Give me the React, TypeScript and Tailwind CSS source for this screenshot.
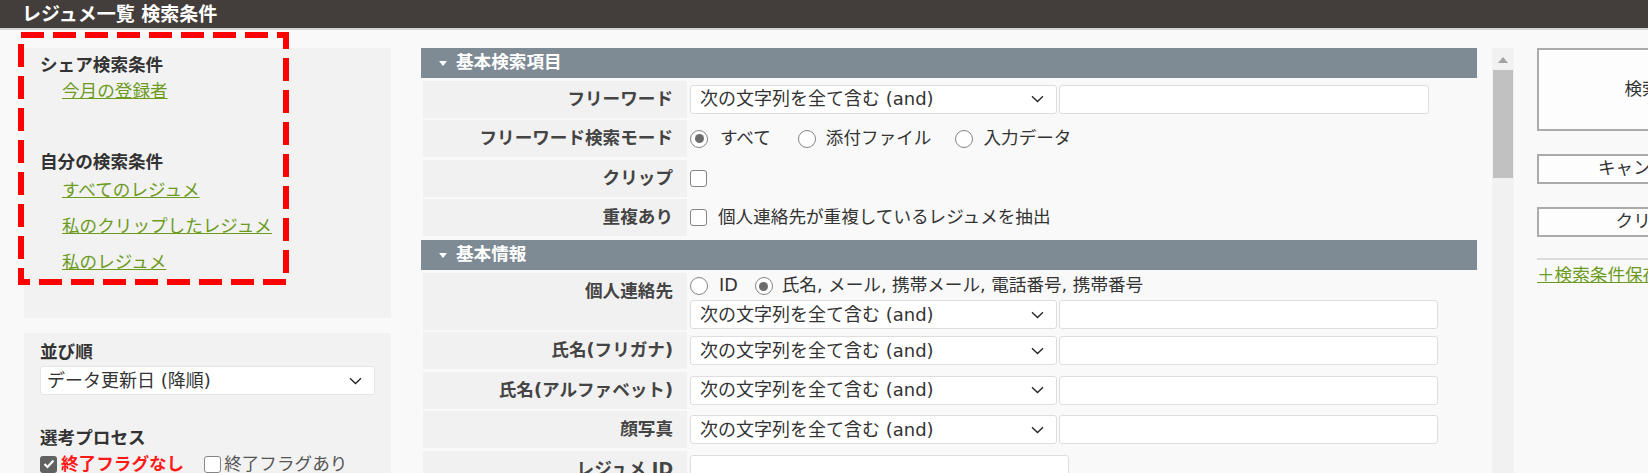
import React from 'react';

const FONT = "font-['DejaVu_Sans','Noto_Sans_CJK_JP',sans-serif]";

function Chevron() {
  return (
    <svg width="13" height="8" viewBox="0 0 13 8" className="shrink-0">
      <path d="M1 1.2 L6.5 6.5 L12 1.2" fill="none" stroke="#222" strokeWidth="1.3" />
    </svg>
  );
}

function Select({ text, w }: { text: string; w: string }) {
  return (
    <div className={`${w} h-[29px] bg-white border border-[#dedede] rounded-[3px] flex items-center justify-between pl-[9px] pr-[12px] text-[18px] leading-none text-[#333] shrink-0`}>
      <span className="whitespace-nowrap">{text}</span>
      <Chevron />
    </div>
  );
}

function Input({ w }: { w: string }) {
  return <div className={`${w} h-[29px] bg-white border border-[#dedede] rounded-[3px] shrink-0`} />;
}

function Radio({ checked }: { checked?: boolean }) {
  return (
    <span className="w-[18px] h-[18px] rounded-full border-[1.5px] border-[#858585] bg-white flex items-center justify-center shrink-0">
      {checked && <span className="w-[9px] h-[9px] rounded-full bg-[#6b6b6b]" />}
    </span>
  );
}

function Check() {
  return <span className="w-[17px] h-[17px] rounded-[3px] border-[1.5px] border-[#858585] bg-white shrink-0" />;
}

function SectionHeader({ title }: { title: string }) {
  return (
    <div className="h-[30px] bg-[#7e8b95] flex items-center pl-[18px] gap-[9px] text-white font-bold text-[17.6px] leading-none">
      <svg width="8" height="5" viewBox="0 0 8 5">
        <path d="M0 0 L8 0 L4 5 Z" fill="#fff" />
      </svg>
      <span>{title}</span>
    </div>
  );
}

function Row({ label, h = 'h-[37px]', children }: { label: string; h?: string; children: React.ReactNode }) {
  return (
    <div className={`flex gap-[3px] ${h}`}>
      <div className="w-[264px] ml-[2px] bg-[#f1f1f1] text-right pr-[14px] font-bold text-[17.6px] leading-[37px] text-[#444] shrink-0 whitespace-nowrap">
        {label}
      </div>
      <div className="flex-1 flex flex-col justify-center">{children}</div>
    </div>
  );
}

const AND = '次の文字列を全て含む (and)';

export default function App() {
  return (
    <div className={`w-[1648px] h-[473px] overflow-hidden bg-[#f9f9f9] relative ${FONT}`}>
      {/* Header */}
      <header className="h-[30px] bg-[#433e3b] border-b-2 border-[#d4d4d4] pl-[22px] flex items-center text-white font-bold text-[19px] leading-none">
        レジュメ一覧 検索条件
      </header>

      <div className="flex pt-[18px] pl-[24px]">
        {/* Left column */}
        <aside className="w-[367px] shrink-0 flex flex-col gap-[15px]">
          <div className="h-[270px] bg-[#f2f2f2] pl-[16px] pt-[4px] text-[17.6px]">
            <div className="font-bold text-[#333] leading-[26px]">シェア検索条件</div>
            <div className="pl-[22px] leading-[26px]">
              <a className="text-[#6c9b1e] underline">今月の登録者</a>
            </div>
            <div className="font-bold text-[#333] leading-[26px] mt-[45px]">自分の検索条件</div>
            <div className="pl-[22px] flex flex-col gap-[10px] mt-[2px] leading-[26px] items-start">
              <a className="text-[#6c9b1e] underline">すべてのレジュメ</a>
              <a className="text-[#6c9b1e] underline">私のクリップしたレジュメ</a>
              <a className="text-[#6c9b1e] underline">私のレジュメ</a>
            </div>
          </div>
          <div className="h-[200px] bg-[#f2f2f2] pl-[16px] pr-[16px] pt-[6px] text-[17.6px]">
            <div className="font-bold text-[#333] leading-[26px]">並び順</div>
            <div className="mt-[1px]">
              <div className="h-[29px] bg-white border border-[#e4e4e4] rounded-[3px] flex items-center justify-between pl-[6px] pr-[12px] text-[18px] text-[#333] leading-none">
                <span>データ更新日 (降順)</span>
                <Chevron />
              </div>
            </div>
            <div className="font-bold text-[#333] leading-[26px] mt-[30px]">選考プロセス</div>
            <div className="flex items-center leading-[26px] whitespace-nowrap">
              <span className="w-[17px] h-[17px] rounded-[3px] bg-[#616161] flex items-center justify-center shrink-0">
                <svg width="12" height="10" viewBox="0 0 12 10">
                  <path d="M1.5 5 L4.5 8 L10.5 1.5" fill="none" stroke="#fff" strokeWidth="2.2" />
                </svg>
              </span>
              <span className="ml-[4px] font-bold text-[#ff1a1a]">終了フラグなし</span>
              <span className="ml-[20px] flex items-center">
                <Check />
              </span>
              <span className="ml-[3px] text-[#555]">終了フラグあり</span>
            </div>
          </div>
        </aside>

        {/* Main form */}
        <main className="w-[1056px] ml-[30px] shrink-0 flex flex-col text-[17.6px] text-[#333]">
          <SectionHeader title="基本検索項目" />
          <div className="flex flex-col gap-[2.5px] mt-[2.5px]">
            <Row label="フリーワード">
              <div className="flex gap-[2px]">
                <Select text={AND} w="w-[367px]" />
                <Input w="w-[370px]" />
              </div>
            </Row>
            <Row label="フリーワード検索モード">
              <div className="flex items-center leading-none whitespace-nowrap">
                <Radio checked />
                <span className="ml-[12px]">すべて</span>
                <span className="ml-[27px]"><Radio /></span>
                <span className="ml-[10px]">添付ファイル</span>
                <span className="ml-[24px]"><Radio /></span>
                <span className="ml-[10px]">入力データ</span>
              </div>
            </Row>
            <Row label="クリップ">
              <div className="flex items-center">
                <Check />
              </div>
            </Row>
            <Row label="重複あり">
              <div className="flex items-center leading-none whitespace-nowrap">
                <Check />
                <span className="ml-[11px]">個人連絡先が重複しているレジュメを抽出</span>
              </div>
            </Row>
          </div>

          <div className="mt-[4px]">
            <SectionHeader title="基本情報" />
          </div>
          <div className="flex flex-col gap-[2.5px] mt-[2.5px]">
            <Row label="個人連絡先" h="h-[57px]">
              <div className="flex flex-col gap-[1px]">
                <div className="flex items-center h-[26px] leading-none whitespace-nowrap">
                  <Radio />
                  <span className="ml-[11px]">ID</span>
                  <span className="ml-[17px]"><Radio checked /></span>
                  <span className="ml-[9px]">氏名, メール, 携帯メール, 電話番号, 携帯番号</span>
                </div>
                <div className="flex gap-[2px]">
                  <Select text={AND} w="w-[367px]" />
                  <Input w="w-[379px]" />
                </div>
              </div>
            </Row>
            <Row label="氏名(フリガナ)">
              <div className="flex gap-[2px]">
                <Select text={AND} w="w-[367px]" />
                <Input w="w-[379px]" />
              </div>
            </Row>
            <Row label="氏名(アルファベット)">
              <div className="flex gap-[2px]">
                <Select text={AND} w="w-[367px]" />
                <Input w="w-[379px]" />
              </div>
            </Row>
            <Row label="顔写真">
              <div className="flex gap-[2px]">
                <Select text={AND} w="w-[367px]" />
                <Input w="w-[379px]" />
              </div>
            </Row>
            <Row label="レジュメ ID">
              <div className="flex gap-[2px]">
                <Input w="w-[379px]" />
              </div>
            </Row>
          </div>
        </main>

        {/* Scrollbar */}
        <div className="w-[22px] ml-[15px] h-[460px] bg-[#f1f1f1] shrink-0 flex flex-col items-center">
          <svg width="10" height="6" viewBox="0 0 10 6" className="mt-[9px]">
            <path d="M0 6 L5 0 L10 6 Z" fill="#a3a3a3" />
          </svg>
          <div className="w-[20px] h-[108px] bg-[#c1c1c1] mt-[7px]" />
        </div>

        {/* Right column */}
        <div className="ml-[23px] w-[210px] shrink-0 flex flex-col text-[17.6px] text-[#333]">
          <div className="h-[83px] border-2 border-[#ababab] bg-[#fdfdfd] flex items-center justify-center leading-none">
            検索
          </div>
          <div className="h-[30px] mt-[23px] border-2 border-[#ababab] bg-[#fdfdfd] flex items-center justify-center leading-none">
            キャンセル
          </div>
          <div className="h-[30px] mt-[23px] border-2 border-[#ababab] bg-[#fdfdfd] flex items-center justify-center leading-none">
            クリア
          </div>
          <div className="mt-[21px] border-t-2 border-[#dcdcdc] pt-[3px] leading-[24px]">
            <a className="text-[#6c9b1e] underline whitespace-nowrap">＋検索条件保存</a>
          </div>
        </div>
      </div>

      {/* Annotation overlay */}
      <svg className="absolute left-[18px] top-[32px] pointer-events-none" width="272" height="254" viewBox="0 0 272 254">
        <rect x="3" y="3" width="265" height="247" fill="none" stroke="#ff0000" strokeWidth="6" strokeDasharray="23 9" />
      </svg>
    </div>
  );
}
